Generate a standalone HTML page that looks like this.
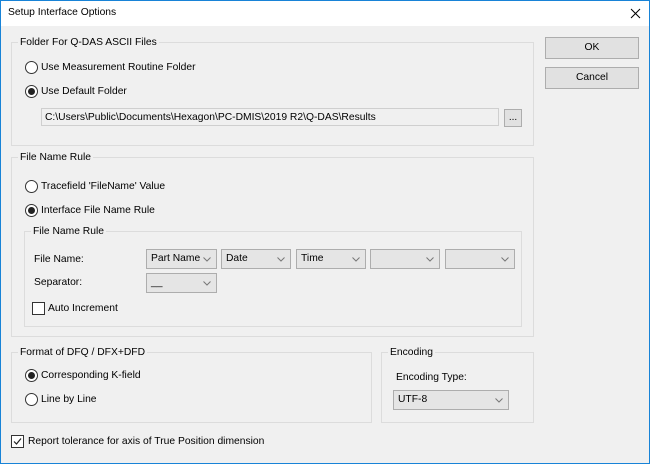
<!DOCTYPE html>
<html><head><style>
*{box-sizing:border-box;margin:0;padding:0}
body{width:650px;height:464px;background:#f0f0f0;font-family:"Liberation Sans",Arial,sans-serif;font-size:10.3px;color:#000;position:relative;overflow:hidden}
.a{position:absolute;white-space:nowrap}
.t{margin-top:2px}
.win{position:absolute;left:0;top:0;width:650px;height:464px;border:1px solid #1883d7}
.title{position:absolute;left:1px;top:1px;width:648px;height:25px;background:#fff}
.grp{position:absolute;border:1px solid #dcdcdc}
.gl{position:absolute;background:#f0f0f0;padding:0 2px;top:-7px;left:6px;line-height:14px}
.rad{position:absolute;width:13px;height:13px;border:1px solid #333;border-radius:50%;background:#fff}
.rad.on::after{content:"";position:absolute;left:2px;top:2px;width:7px;height:7px;border-radius:50%;background:#222}
.chk{position:absolute;width:13px;height:13px;border:1px solid #333;background:#fff}
.btn{position:absolute;background:#e1e1e1;border:1px solid #adadad;text-align:center}
.cmb{position:absolute;background:#e5e5e5;border:1px solid #adadad;height:20px;line-height:18px;padding-left:4px}
.cmb svg{position:absolute;right:5px;top:7px}
</style></head><body>
<div class="win"></div>
<div class="title"></div>
<div class="a" style="left:8px;top:7px">Setup Interface Options</div>
<svg class="a" style="left:630px;top:8px" width="11" height="11"><path d="M1 1L10 10M10 1L1 10" stroke="#000" stroke-width="1"/></svg>

<div class="btn" style="left:545px;top:37px;width:94px;height:22px;line-height:20px">OK</div>
<div class="btn" style="left:545px;top:67px;width:94px;height:22px;line-height:20px">Cancel</div>

<div class="grp" style="left:11px;top:42px;width:523px;height:104px"><div class="gl">Folder For Q-DAS ASCII Files</div></div>
<div class="rad" style="left:25px;top:61px"></div><div class="a t" style="left:41px;top:60px">Use Measurement Routine Folder</div>
<div class="rad on" style="left:25px;top:85px"></div><div class="a t" style="left:41px;top:84px">Use Default Folder</div>
<div class="a" style="left:41px;top:108px;width:458px;height:18px;border:1px solid #cfcfcf;background:#f0f0f0;padding:3px 0 0 3px">C:\Users\Public\Documents\Hexagon\PC-DMIS\2019 R2\Q-DAS\Results</div>
<div class="btn" style="left:504px;top:109px;width:18px;height:18px;line-height:16px;font-size:10px">...</div>

<div class="grp" style="left:11px;top:157px;width:523px;height:180px"><div class="gl">File Name Rule</div></div>
<div class="rad" style="left:25px;top:180px"></div><div class="a t" style="left:41px;top:179px">Tracefield 'FileName' Value</div>
<div class="rad on" style="left:25px;top:204px"></div><div class="a t" style="left:41px;top:203px">Interface File Name Rule</div>

<div class="grp" style="left:24px;top:231px;width:498px;height:96px"><div class="gl">File Name Rule</div></div>
<div class="a t" style="left:34px;top:252px">File Name:</div>
<div class="a t" style="left:34px;top:275px">Separator:</div>
<div class="cmb" style="left:146px;top:249px;width:71px">Part Name<svg width="8" height="5"><path d="M0.5 0.5L4 4L7.5 0.5" fill="none" stroke="#777"/></svg></div>
<div class="cmb" style="left:221px;top:249px;width:70px">Date<svg width="8" height="5"><path d="M0.5 0.5L4 4L7.5 0.5" fill="none" stroke="#777"/></svg></div>
<div class="cmb" style="left:296px;top:249px;width:70px">Time<svg width="8" height="5"><path d="M0.5 0.5L4 4L7.5 0.5" fill="none" stroke="#777"/></svg></div>
<div class="cmb" style="left:370px;top:249px;width:70px"><svg width="8" height="5"><path d="M0.5 0.5L4 4L7.5 0.5" fill="none" stroke="#777"/></svg></div>
<div class="cmb" style="left:445px;top:249px;width:70px"><svg width="8" height="5"><path d="M0.5 0.5L4 4L7.5 0.5" fill="none" stroke="#777"/></svg></div>
<div class="cmb" style="left:146px;top:273px;width:71px">__<svg width="8" height="5"><path d="M0.5 0.5L4 4L7.5 0.5" fill="none" stroke="#777"/></svg></div>
<div class="chk" style="left:32px;top:302px"></div><div class="a t" style="left:48px;top:301px">Auto Increment</div>

<div class="grp" style="left:11px;top:352px;width:361px;height:71px"><div class="gl">Format of DFQ / DFX+DFD</div></div>
<div class="rad on" style="left:25px;top:369px"></div><div class="a t" style="left:41px;top:368px">Corresponding K-field</div>
<div class="rad" style="left:25px;top:393px"></div><div class="a t" style="left:41px;top:392px">Line by Line</div>

<div class="grp" style="left:381px;top:352px;width:153px;height:71px"><div class="gl">Encoding</div></div>
<div class="a t" style="left:396px;top:370px">Encoding Type:</div>
<div class="cmb" style="left:393px;top:390px;width:116px">UTF-8<svg width="8" height="5"><path d="M0.5 0.5L4 4L7.5 0.5" fill="none" stroke="#777"/></svg></div>

<div class="chk" style="left:11px;top:435px"><svg width="11" height="11" style="position:absolute;left:0;top:0"><path d="M2 5.5L4.5 8L9 2.5" fill="none" stroke="#222" stroke-width="1.2"/></svg></div>
<div class="a t" style="left:28px;top:434px">Report tolerance for axis of True Position dimension</div>
</body></html>
